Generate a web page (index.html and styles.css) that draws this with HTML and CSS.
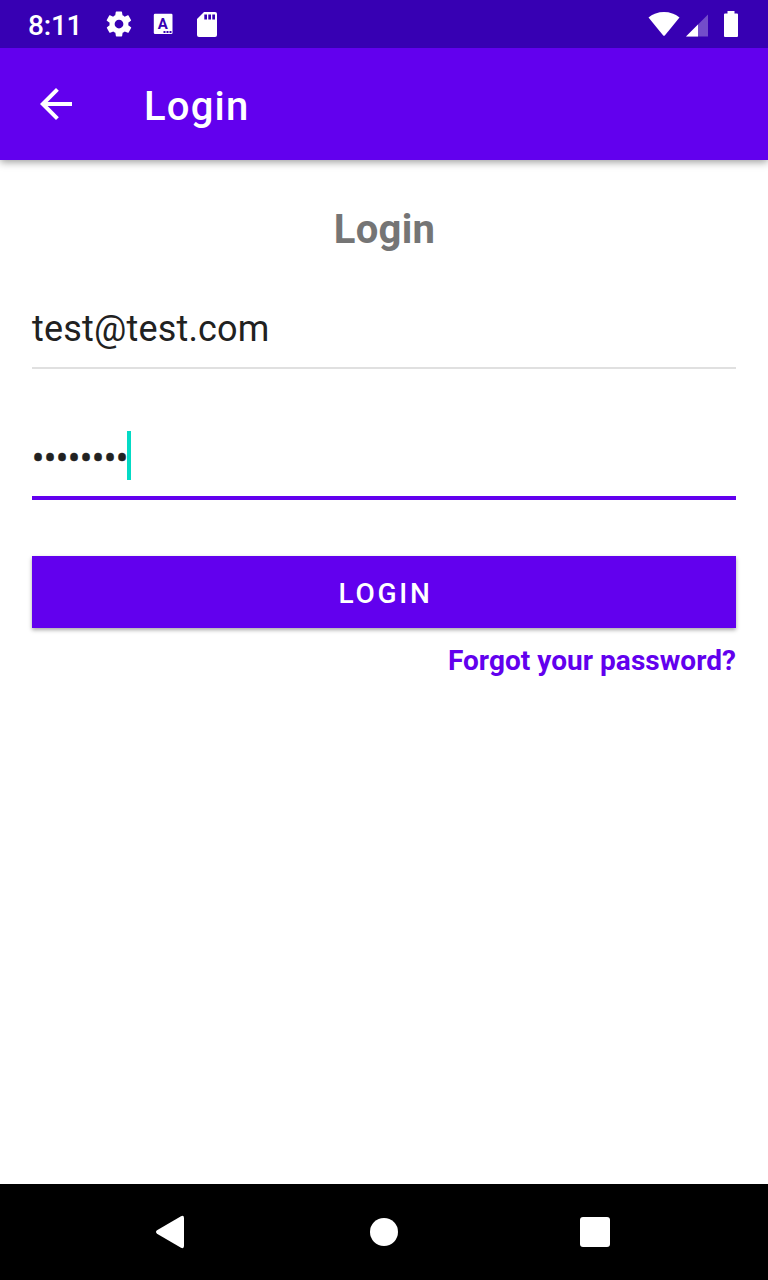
FILE: index.html
```html
<!DOCTYPE html>
<html lang="en">
<head>
<meta charset="utf-8">
<title>Login</title>
<link rel="stylesheet" href="styles.css">
</head>
<body>
<div class="screen">
  <div class="status-bar">
    <span class="clock">8:11</span>
    <svg class="gear" width="30" height="30" viewBox="0 0 24 24" fill="currentColor"><path d="M19.4 13c0-.3.1-.6.1-1s0-.7-.1-1l2.1-1.600c.2-.2.2-.4.1-.6l-2-3.500c-.1-.2-.4-.3-.6-.2l-2.500 1c-.5-.4-1.100-.7-1.700-1l-.4-2.600c0-.3-.2-.5-.5-.5h-4c-.3 0-.5.2-.5.4l-.4 2.700c-.6.2-1.100.6-1.700 1l-2.500-1c-.2-.1-.5 0-.6.2l-2 3.500c-.1.2-.1.5.1.6L4.500 11c0 .3-.1.600-.1 1s0 .7.1 1l-2.100 1.600c-.2.2-.2.400-.1.600l2 3.500c.1.2.4.3.6.2l2.500-1c.5.4 1.100.7 1.700 1l.4 2.600c0 .2.2.4.5.4h4c.2 0 .5-.2.5-.4l.4-2.600c.6-.3 1.200-.6 1.700-1l2.500 1c.2.1.5 0 .6-.2l2-3.500c.1-.2.1-.5-.1-.6L19.400 13zM12 15.500a3.500 3.500 0 1 1 0-7 3.500 3.500 0 0 1 0 7z"/></svg>
    <svg class="keyboard" width="20" height="22" viewBox="0 0 20 22"><rect x="0.800" y="0.700" width="18.700" height="20.300" rx="1.200" fill="currentColor"/><text class="icon-letter" x="9.800" y="16" text-anchor="middle">A</text><path class="icon-cut" d="M10.500 18h2v2h-2zm3 0h2v2h-2zm3 0h2v2h-2z"/></svg>
    <svg class="sd-card" width="20" height="25" viewBox="0 0 20 25" fill="currentColor"><path d="M7 0H18a2 2 0 0 1 2 2V23a2 2 0 0 1-2 2H2a2 2 0 0 1-2-2V7z"/><path class="icon-cut" d="M7.300 2.500h2.700v5H7.300zm4 0H14v5h-2.700zm4 0H18v5h-2.700z"/></svg>
    <div class="indicators">
      <svg class="wifi" width="32" height="24" viewBox="0 0 32 24" fill="currentColor"><path d="M0.500 5.400C5 1.900 10 0 16 0s11 1.900 15.500 5.400L17 23.200q-1 1.200-2 0z"/></svg>
      <svg class="signal" width="22" height="23" viewBox="0 0 22 23" fill="currentColor"><path opacity=".3" d="M22 0.500V22.500H0z"/><path d="M12 10.500V22.500H0z"/></svg>
      <svg class="battery" width="14" height="26" viewBox="0 0 14 26" fill="currentColor"><path d="M3.500 0h7v2.500h2.500A1 1 0 0 1 14 3.500v21.500a1 1 0 0 1-1 1h-12A1 1 0 0 1 0 25V3.500a1 1 0 0 1 1-1h2.500z"/></svg>
    </div>
  </div>
  <header class="app-bar">
    <svg width="32" height="32" viewBox="4 4 16 16" fill="currentColor"><path d="M20 11H7.830l5.590-5.590L12 4l-8 8 8 8 1.410-1.410L7.830 13H20v-2z"/></svg>
    <span class="app-title">Login</span>
  </header>
  <main class="content">
    <h1 class="heading">Login</h1>
    <div class="field">test@test.com</div>
    <div class="field field-focused"><span class="dots">••••••••</span><span class="caret"></span></div>
    <button class="login-button">LOGIN</button>
    <a class="forgot">Forgot your password?</a>
  </main>
  <nav class="nav-bar">
    <svg class="nav-back" width="28" height="34" viewBox="0 0 28 34" fill="currentColor"><path d="M1 15.300L25 1.200Q28 0 28 3V31Q28 34 25 32.800L1 18.700Q-1 17 1 15.300z"/></svg>
    <span class="nav-home"></span>
    <span class="nav-recent"></span>
  </nav>
</div>
</body>
</html>
```
FILE: styles.css
```css
* { box-sizing: border-box; }
body { margin: 0; font-family: Roboto, sans-serif; background: #fff; }
svg { display: block; flex: none; }
.screen { width: 768px; height: 1280px; display: flex; flex-direction: column; overflow: hidden; }
.status-bar { height: 48px; flex: none; display: flex; align-items: center; padding: 0 30px 0 28px; background: #3700b3; color: #fff; }
.clock { width: 76px; font-size: 28px; font-weight: 500; line-height: 32px; padding-top: 3px; letter-spacing: -.2px; }
.keyboard { margin-left: 19px; }
.sd-card { margin-left: 24px; }
.icon-cut { fill: #3700b3; }
.icon-letter { fill: #3700b3; font-size: 15px; font-weight: 700; }
.indicators { margin-left: auto; display: flex; align-items: center; }
.wifi { margin-top: -1px; }
.signal { margin: 2px 0 0 6px; }
.battery { margin-left: 16px; }
.app-bar { height: 112px; flex: none; display: flex; align-items: center; padding: 0 40px; background: #6200ee; color: #fff; box-shadow: 0 2px 8px rgba(0,0,0,.4); clip-path: inset(0 0 -16px 0); }
.app-title { margin: 6px 0 0 72px; font-size: 40px; line-height: 48px; font-weight: 500; letter-spacing: 1.200px; }
.content { flex: 1; display: flex; flex-direction: column; padding: 46px 32px 0; }
.heading { margin: 0; height: 47px; text-align: center; font-size: 40px; line-height: 48px; font-weight: 700; letter-spacing: .3px; text-indent: 1px; color: #757575; }
.field { height: 84px; margin-top: 32px; padding-top: 23px; font-size: 36px; line-height: 42px; letter-spacing: .180px; color: #212121; border-bottom: 2px solid #e0e0e0; }
.field-focused { height: 85px; margin-top: 46px; padding: 16px 0 0; display: flex; border-bottom: 4px solid #6200ee; }
.dots { width: 95px; height: 49px; line-height: 56px; letter-spacing: -.140px; white-space: nowrap; -webkit-text-stroke: .5px #212121; }
.caret { width: 4px; height: 49px; background: #03dac5; }
.login-button { height: 72px; flex: none; margin: 56px 0 0; padding: 3px 0 0 3px; border: 0; background: #6200ee; color: #fff; font: 500 28px/33px Roboto, sans-serif; letter-spacing: 2.700px; box-shadow: 0 2px 4px rgba(0,0,0,.35); }
.forgot { align-self: flex-end; margin-top: 16px; font-size: 28px; line-height: 33px; font-weight: 700; letter-spacing: .040px; color: #6200ee; }
.nav-bar { height: 96px; flex: none; display: flex; align-items: center; padding: 0 156px; background: #000; color: #fff; }
.nav-home { width: 28px; height: 28px; margin-left: 186px; border-radius: 50%; background: #fff; }
.nav-recent { width: 30px; height: 30px; margin-left: 182px; border-radius: 3px; background: #fff; }
```
